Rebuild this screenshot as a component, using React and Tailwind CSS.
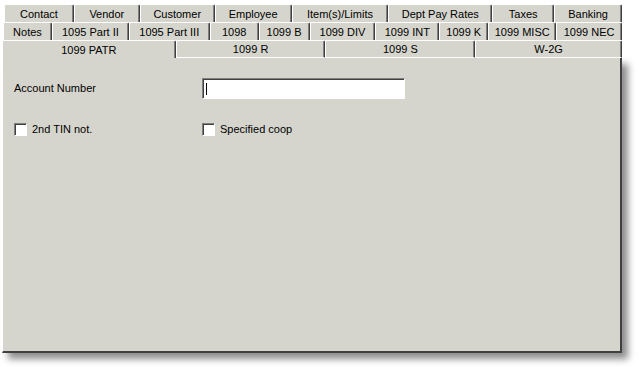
const row1 = [
  ["Contact", 70],
  ["Vendor", 66],
  ["Customer", 75],
  ["Employee", 77],
  ["Item(s)/Limits", 97],
  ["Dept Pay Rates", 104],
  ["Taxes", 62],
  ["Banking", 68],
];

const row2 = [
  ["Notes", 49],
  ["1095 Part II", 77],
  ["1095 Part III", 81],
  ["1098", 49],
  ["1099 B", 51],
  ["1099 DIV", 66],
  ["1099 INT", 64],
  ["1099 K", 49],
  ["1099 MISC", 68],
  ["1099 NEC", 66],
];

const row3 = [
  ["1099 PATR", 174, true],
  ["1099 R", 150],
  ["1099 S", 150],
  ["W-2G", 147],
];

const Tab = ({ label, width, selected, last }) => (
  <div
    style={{ width }}
    className={
      "h-[18px] flex items-center justify-center pt-px border-t border-l border-white rounded-tl-[2px] rounded-tr-[2px] border-r border-r-[#404040] shadow-[inset_-1px_0_0_#808080] bg-[#d5d5cd] " +
      (selected ? "" : last ? "border-b border-b-white" : "")
    }
  >
    <span className="leading-none">{label}</span>
  </div>
);

const TabRow = ({ tabs, offset, bottom }) => (
  <div className={"flex " + offset}>
    {tabs.map(([label, width, selected]) => (
      <Tab key={label} label={label} width={width} selected={selected} last={bottom} />
    ))}
  </div>
);

const Checkbox = ({ label }) => (
  <div className="flex items-center gap-[5px]">
    <div className="w-[13px] h-[13px] bg-white border border-t-[#808080] border-l-[#808080] border-r-white border-b-white shadow-[inset_1px_1px_0_#404040]" />
    <span>{label}</span>
  </div>
);

export default function App() {
  return (
    <div
      className="w-[640px] h-[367px] bg-white text-[11px] text-black relative"
      style={{ fontFamily: '"Liberation Sans", Arial, sans-serif' }}
    >
      <div className="pt-[4px] pl-[2px] w-[622px]">
        <TabRow tabs={row1} offset="pl-[2px]" />
        <TabRow tabs={row2} offset="pl-[1px]" />
        <TabRow tabs={row3} offset="" bottom />
        <div className="h-[295px] bg-[#d5d5cd] border-l border-white border-r-2 border-r-[#404040] border-b-2 border-b-[#404040] shadow-[6px_6px_7px_rgba(0,0,0,0.45)] pl-[11px] pt-[20px]">
          <div className="grid grid-cols-[188px_1fr] gap-y-[22px]">
            <div className="h-[21px] flex items-center">Account Number</div>
            <div className="w-[203px] h-[21px] bg-white border border-t-[#808080] border-l-[#808080] border-r-white border-b-white shadow-[inset_1px_1px_0_#404040] flex items-center pl-[3px]">
              <div className="w-px h-[12px] bg-black" />
            </div>
            <Checkbox label="2nd TIN not." />
            <Checkbox label="Specified coop" />
          </div>
        </div>
      </div>
    </div>
  );
}
